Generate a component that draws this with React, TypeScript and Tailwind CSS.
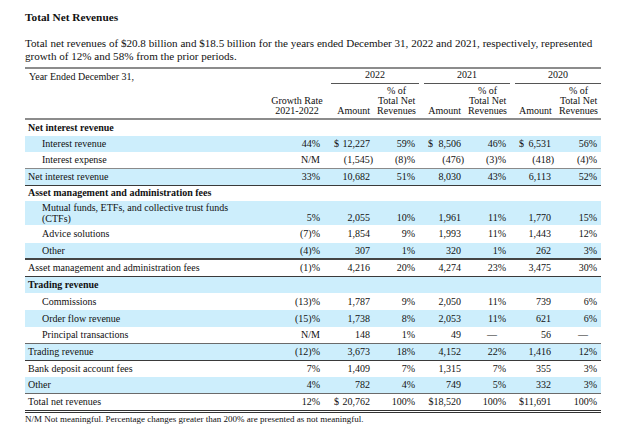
import React from "react"

type Kind = "section" | "item" | "subtotal" | "plain" | "total"

type Row = {
  label: React.ReactNode
  kind: Kind
  h: string
  blue?: boolean
  growth?: string
  values?: string[]
  dollar?: boolean
  tall?: boolean
  border?: string
}

const rows: Row[] = [
  { label: "Net interest revenue", kind: "section", h: "h-[17px]" },
  {
    label: "Interest revenue",
    kind: "item",
    h: "h-[16px]",
    blue: true,
    growth: "44%",
    values: ["12,227", "59%", "8,506", "46%", "6,531", "56%"],
    dollar: true,
  },
  {
    label: "Interest expense",
    kind: "item",
    h: "h-[16px]",
    growth: "N/M",
    values: ["(1,545)", "(8)%", "(476)", "(3)%", "(418)", "(4)%"],
  },
  {
    label: "Net interest revenue",
    kind: "subtotal",
    h: "h-[17px]",
    blue: true,
    growth: "33%",
    values: ["10,682", "51%", "8,030", "43%", "6,113", "52%"],
    border: "border-t border-b border-t-[#8a8a8a] border-b-[#3a3a3a]",
  },
  { label: "Asset management and administration fees", kind: "section", h: "h-[16px]" },
  {
    label: (
      <>
        Mutual funds, ETFs, and collective trust funds
        <br />
        (CTFs)
      </>
    ),
    kind: "item",
    h: "h-[24px]",
    blue: true,
    tall: true,
    growth: "5%",
    values: ["2,055", "10%", "1,961", "11%", "1,770", "15%"],
  },
  {
    label: "Advice solutions",
    kind: "item",
    h: "h-[18px]",
    growth: "(7)%",
    values: ["1,854", "9%", "1,993", "11%", "1,443", "12%"],
  },
  {
    label: "Other",
    kind: "item",
    h: "h-[16px]",
    blue: true,
    growth: "(4)%",
    values: ["307", "1%", "320", "1%", "262", "3%"],
  },
  {
    label: "Asset management and administration fees",
    kind: "subtotal",
    h: "h-[17px]",
    growth: "(1)%",
    values: ["4,216", "20%", "4,274", "23%", "3,475", "30%"],
    border: "border-t-2 border-b border-t-[#444] border-b-[#3a3a3a]",
  },
  { label: "Trading revenue", kind: "section", h: "h-[17px]", blue: true },
  {
    label: "Commissions",
    kind: "item",
    h: "h-[17px]",
    growth: "(13)%",
    values: ["1,787", "9%", "2,050", "11%", "739", "6%"],
  },
  {
    label: "Order flow revenue",
    kind: "item",
    h: "h-[17px]",
    blue: true,
    growth: "(15)%",
    values: ["1,738", "8%", "2,053", "11%", "621", "6%"],
  },
  {
    label: "Principal transactions",
    kind: "item",
    h: "h-[16px]",
    growth: "N/M",
    values: ["148", "1%", "49", "—", "56", "—"],
  },
  {
    label: "Trading revenue",
    kind: "subtotal",
    h: "h-[17px]",
    blue: true,
    growth: "(12)%",
    values: ["3,673", "18%", "4,152", "22%", "1,416", "12%"],
    border: "border-t border-b border-t-[#6a6a6a] border-b-[#3a3a3a]",
  },
  {
    label: "Bank deposit account fees",
    kind: "plain",
    h: "h-[17px]",
    growth: "7%",
    values: ["1,409", "7%", "1,315", "7%", "355", "3%"],
  },
  {
    label: "Other",
    kind: "plain",
    h: "h-[16px]",
    blue: true,
    growth: "4%",
    values: ["782", "4%", "749", "5%", "332", "3%"],
  },
  {
    label: "Total net revenues",
    kind: "total",
    h: "h-[18px]",
    growth: "12%",
    values: ["$ 20,762", "100%", "$18,520", "100%", "$11,691", "100%"],
    border: "border-t border-b-[3px] border-double border-t-[#6a6a6a] border-b-[#333]",
  },
]

// amount cells: left padding puts the "$" under the start of each year underline
const amountPad = ["pl-[11px]", "pl-[9px]", "pl-[9px]"]

function Amount({ value, dollar }: { value: string; dollar?: boolean }) {
  const neg = value.endsWith(")")
  if (value.startsWith("$ ")) {
    return (
      <div className="flex justify-between">
        <span>$</span>
        <span>{value.slice(2)}</span>
      </div>
    )
  }
  return (
    <div className="flex justify-between">
      <span>{dollar ? "$" : ""}</span>
      <span className={neg ? "-mr-[3px]" : ""}>{value}</span>
    </div>
  )
}

function Pct({ value }: { value: string }) {
  if (value === "—") return <span className="pr-[9px]">—</span>
  return <span>{value}</span>
}

export default function App() {
  return (
    <div className="w-[640px] h-[431px] bg-white px-[25px] pt-[10px] text-[#111] font-['Liberation_Serif',serif]">
      <h2 className="text-[11.3px] font-bold leading-[14px]">Total Net Revenues</h2>
      <p className="mt-[13px] text-[11.1px] leading-[13px]">
        Total net revenues of $20.8 billion and $18.5 billion for the years ended December 31, 2022 and
        2021, respectively, represented
        <br />
        growth of 12% and 58% from the prior periods.
      </p>

      <table className="mt-[4px] w-[576px] table-fixed text-[10px] leading-[10px]">
        <colgroup>
          <col className="w-[240px]" />
          <col className="w-[58px]" />
          <col className="w-[51px]" />
          <col className="w-[45px]" />
          <col className="w-[46px]" />
          <col className="w-[45px]" />
          <col className="w-[45px]" />
          <col className="w-[46px]" />
        </colgroup>
        <thead>
          <tr className="border-t-2 border-t-[#8c8c8c] h-[15px]">
            <td className="pl-[4px] align-middle">Year Ended December 31,</td>
            <td rowSpan={2} className="pl-[6px] text-center align-bottom pb-[2px]">
              Growth Rate
              <br />
              2021-2022
            </td>
            {["2022", "2021", "2020"].map((y, i) => (
              <td key={y} colSpan={2} className="align-top pt-[1px]">
                <div
                  className={`${i === 0 ? "ml-[8px]" : "ml-[5px]"} border-b border-[#555] pb-[3px] text-center`}
                >
                  {y}
                </div>
              </td>
            ))}
          </tr>
          <tr className="border-b-2 border-b-[#8c8c8c] h-[35px]">
            <td />
            {[0, 1, 2].map((i) => (
              <React.Fragment key={i}>
                <td className={`${amountPad[i]} pr-[4px] text-right align-bottom pb-[2px]`}>Amount</td>
                <td className="pr-[3px] text-right align-bottom pb-[2px]">
                  <span className="inline-block text-center">
                    % of
                    <br />
                    Total Net
                    <br />
                    Revenues
                  </span>
                </td>
              </React.Fragment>
            ))}
          </tr>
        </thead>
        <tbody>
          {rows.map((r, idx) => (
            <tr key={idx} className={`${r.blue ? "bg-[#cdeefc]" : ""} ${r.h} ${r.border ?? ""}`}>
              <td
                className={`${r.kind === "item" ? "pl-[17px]" : "pl-[3px]"} ${
                  r.kind === "section" ? "font-bold" : ""
                } ${r.tall ? "leading-[11px] align-middle" : "align-middle"}`}
              >
                {r.label}
              </td>
              {r.values ? (
                <>
                  <td className={`pr-[3px] text-right ${r.tall ? "align-bottom pb-[2px]" : ""}`}>{r.growth}</td>
                  {[0, 1, 2].map((i) => (
                    <React.Fragment key={i}>
                      <td className={`${amountPad[i]} pr-[4px] ${r.tall ? "align-bottom pb-[2px]" : ""}`}>
                        <Amount value={r.values![i * 2]} dollar={r.dollar} />
                      </td>
                      <td className={`pr-[4px] text-right ${r.tall ? "align-bottom pb-[2px]" : ""}`}>
                        <Pct value={r.values![i * 2 + 1]} />
                      </td>
                    </React.Fragment>
                  ))}
                </>
              ) : (
                <td colSpan={7} />
              )}
            </tr>
          ))}
        </tbody>
      </table>

      <p className="mt-[1px] text-[9px] leading-[11px]">
        N/M Not meaningful. Percentage changes greater than 200% are presented as not meaningful.
      </p>
    </div>
  )
}
